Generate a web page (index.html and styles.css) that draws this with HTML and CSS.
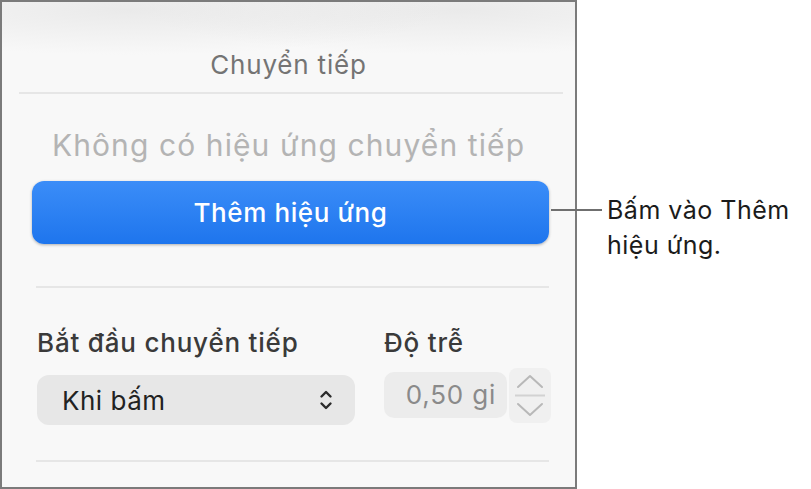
FILE: index.html
```html
<!DOCTYPE html>
<html lang="vi">
<head>
<meta charset="UTF-8">
<meta name="viewport" content="width=device-width, initial-scale=1.0">
<title>Chuyển tiếp</title>
<link rel="stylesheet" href="styles.css">
</head>
<body>
<div class="page">
  <div class="panel">
    <div class="panel-title">Chuyển tiếp</div>
    <div class="divider divider-wide"></div>

    <p class="empty-note">Không có hiệu ứng chuyển tiếp</p>
    <button class="add-btn">Thêm hiệu ứng</button>

    <div class="divider"></div>

    <div class="options">
      <div class="field field-start">
        <div class="field-label">Bắt đầu chuyển tiếp</div>
        <div class="select-box">
          <span>Khi bấm</span>
          <svg class="updown" width="14" height="24" viewBox="0 0 14 24">
            <path d="M2.5 8.5 L7 4 L11.5 8.5 M2.5 15.5 L7 20 L11.5 15.5" fill="none" stroke="#2b2b2b" stroke-width="2.4" stroke-linecap="round" stroke-linejoin="round"/>
          </svg>
        </div>
      </div>
      <div class="field field-delay">
        <div class="field-label">Độ trễ</div>
        <div class="delay-row">
          <div class="num-input">0,50 gi</div>
          <div class="stepper">
            <svg width="42" height="55" viewBox="0 0 42 55">
              <path d="M9 19 L21 8 L33 19" fill="none" stroke="#b8b8b8" stroke-width="2" stroke-linecap="round" stroke-linejoin="round"/>
              <path d="M6 27.5 H36" stroke="#d2d2d2" stroke-width="2"/>
              <path d="M9 36 L21 47 L33 36" fill="none" stroke="#b8b8b8" stroke-width="2" stroke-linecap="round" stroke-linejoin="round"/>
            </svg>
          </div>
        </div>
      </div>
    </div>

    <div class="divider"></div>
  </div>

  <div class="callout">
    <div class="callout-line"></div>
    <div class="callout-text">Bấm vào Thêm<br>hiệu ứng.</div>
  </div>
</div>
</body>
</html>
```

FILE: styles.css
```css
body {
  margin: 0;
  padding: 0;
  background: #fff;
  font-family: Inter, "Noto Sans", sans-serif;
}
.page {
  position: relative;
  width: 811px;
  height: 489px;
}
.panel {
  box-sizing: border-box;
  width: 577px;
  height: 489px;
  border: 2px solid #7b7b7b;
  background:
    radial-gradient(ellipse 55% 45px at 22% 8px, rgba(220,220,220,0.5), rgba(240,240,240,0) 100%),
    radial-gradient(ellipse 55% 45px at 80% 8px, rgba(220,220,220,0.5), rgba(240,240,240,0) 100%),
    #f8f8f8;
}
.panel-title {
  padding-top: 47px;
  line-height: 32px;
  font-size: 26px;
  letter-spacing: 0.8px;
  color: #747474;
  text-align: center;
  margin-bottom: 11px;
}
.divider {
  height: 2px;
  background: #e6e6e6;
  margin: 0 26px 0 34px;
}
.divider-wide {
  margin: 0 12px 0 17px;
}
.empty-note {
  margin: 33px 0 0;
  line-height: 36px;
  font-size: 30px;
  letter-spacing: 1.1px;
  color: #b4b4b4;
  text-align: center;
}
.add-btn {
  display: block;
  width: 517px;
  height: 63px;
  margin: 18px 0 42px 30px;
  border: none;
  border-radius: 12px;
  background: linear-gradient(#3b8df8, #1e75ed);
  box-shadow: 0 1px 3px rgba(0,0,0,0.3);
  color: #fff;
  font-family: inherit;
  font-size: 26px;
  font-weight: 500;
  letter-spacing: 0.6px;
}
.options {
  display: flex;
  margin: 40px 0 35px 35px;
}
.field-label {
  line-height: 30px;
  font-size: 26px;
  font-weight: 500;
  letter-spacing: 0.8px;
  color: #3a3a3a;
  margin-bottom: 17px;
}
.field-start {
  width: 318px;
}
.field-delay {
  margin-left: 29px;
}
.select-box {
  display: flex;
  align-items: center;
  justify-content: space-between;
  height: 50px;
  padding: 0 22px 0 25px;
  border-radius: 12px;
  background: #e7e7e7;
  font-size: 26px;
  letter-spacing: 0.5px;
  color: #222;
}
.delay-row {
  display: flex;
  align-items: flex-start;
  margin-top: -7px;
}
.num-input {
  box-sizing: border-box;
  width: 123px;
  height: 46px;
  margin-top: 4px;
  padding-right: 11px;
  border-radius: 10px;
  background: #ececec;
  line-height: 46px;
  font-size: 26px;
  letter-spacing: 0.8px;
  color: #8a8a8a;
  text-align: right;
}
.stepper {
  width: 42px;
  height: 55px;
  margin-left: 2px;
  border-radius: 8px;
  background: #f0f0f0;
}
.stepper svg {
  display: block;
}
.callout {
  position: absolute;
  left: 551px;
  top: 193px;
  display: flex;
  align-items: flex-start;
}
.callout-line {
  width: 51px;
  height: 2px;
  margin-top: 16px;
  background: #6f6f6f;
}
.callout-text {
  margin-left: 5px;
  line-height: 35px;
  font-size: 25px;
  letter-spacing: 0.5px;
  color: #1b1b1b;
}
```
